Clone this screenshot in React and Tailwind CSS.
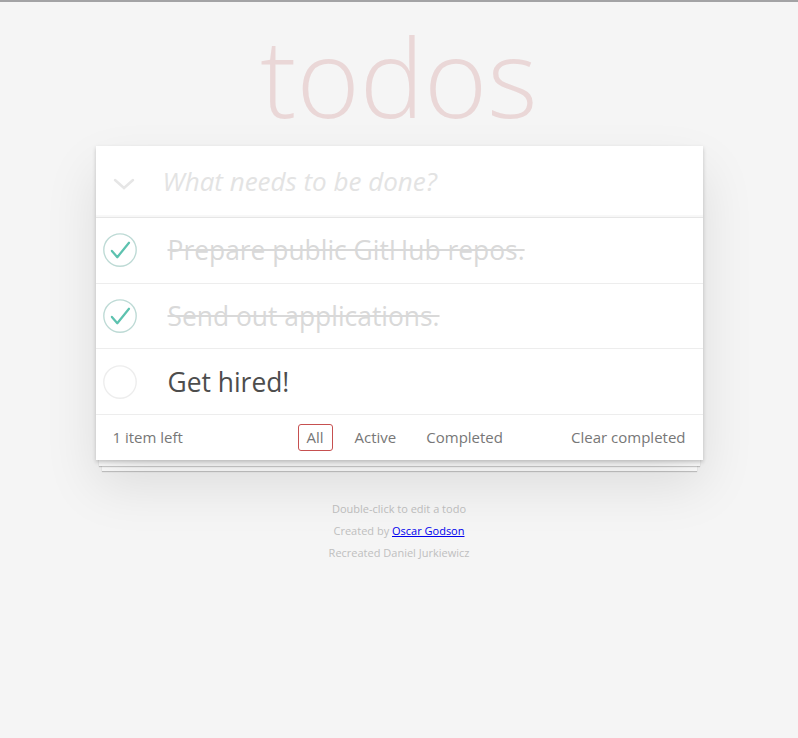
import React from "react";

const todos = [
	{ id: 1, title: "Prepare public GitHub repos.", completed: true },
	{ id: 2, title: "Send out applications.", completed: true },
	{ id: 3, title: "Get hired!", completed: false },
];

const Check = ({ done }) => (
	<svg className="w-[36px] h-[36px] shrink-0" viewBox="0 0 40 40">
		<circle
			cx="20"
			cy="20"
			r="18"
			fill="none"
			stroke={done ? "#bddad5" : "#ededed"}
			strokeWidth="1.5"
		/>
		{done && (
			<path
				d="M11 21l6 7 13-16"
				fill="none"
				stroke="#5dc2af"
				strokeWidth="2.5"
				strokeLinecap="round"
				strokeLinejoin="round"
			/>
		)}
	</svg>
);

const App = () => {
	return (
		<div
			className="min-h-[738px] bg-[#f5f5f5] border-t-2 border-[#a3a3a5] flex flex-col items-center text-[#4d4d4d]"
			style={{ fontFamily: '"Open Sans", "Liberation Sans", sans-serif' }}
		>
			<h1 className="mt-[6px] text-[108px] leading-[138px] font-thin text-[rgba(175,47,47,0.15)] tracking-normal">
				todos
			</h1>

			<div className="relative w-[607px]">
				{/* stacked paper */}
				<div className="absolute left-[6px] right-[6px] bottom-[-11px] h-[20px] bg-white shadow-[0_1px_1px_rgba(0,0,0,0.2)]" />
				<div className="absolute left-[3px] right-[3px] bottom-[-6px] h-[20px] bg-white shadow-[0_1px_1px_rgba(0,0,0,0.2)]" />

				<section className="relative bg-white shadow-[0_2px_4px_rgba(0,0,0,0.2),0_25px_50px_rgba(0,0,0,0.1)]">
					{/* new todo */}
					<div className="flex items-center h-[72px] shadow-[inset_0_-2px_1px_rgba(0,0,0,0.03)] border-b border-[#e6e6e6]">
						<div className="w-[56px] flex justify-center pt-[4px]">
							<svg className="w-[22px] h-[14px]" viewBox="0 0 22 14">
								<path
									d="M2 3l9 8 9-8"
									fill="none"
									stroke="#e6e6e6"
									strokeWidth="2.5"
									strokeLinecap="round"
								/>
							</svg>
						</div>
						<input
							className="flex-1 pl-[11px] text-[26px] italic bg-transparent outline-none placeholder:text-[#e3e3e3]"
							placeholder="What needs to be done?"
						/>
					</div>

					<ul>
						{todos.map((t) => (
							<li
								key={t.id}
								className="flex items-center h-[65.67px] border-b border-[#ededed] pl-[6px]"
							>
								<Check done={t.completed} />
								<span
									className={`ml-[30px] text-[26.4px] leading-[34px] ${
										t.completed
											? "text-[#d9d9d9] line-through"
											: "text-[#4d4d4d]"
									}`}
								>
									{t.title}
								</span>
							</li>
						))}
					</ul>

					<footer className="flex items-center h-[45px] px-[17px] text-[15px] text-[#777]">
						<span className="w-[186px]">1 item left</span>
						<div className="flex items-center gap-[14px] -ml-[1px]">
							<span className="px-[8px] py-[1px] rounded-[3px] border border-[#c65050]">
								All
							</span>
							<span className="px-[8px] py-[1px]">Active</span>
							<span className="px-[8px] py-[1px]">Completed</span>
						</div>
						<span className="ml-auto">Clear completed</span>
					</footer>
				</section>
			</div>

			<footer className="mt-[38px] text-[11px] leading-[22px] text-[#bfbfbf] text-center">
				<p>Double-click to edit a todo</p>
				<p>
					Created by{" "}
					<a href="#" className="text-[#0000ee] underline">
						Oscar Godson
					</a>
				</p>
				<p>Recreated Daniel Jurkiewicz</p>
			</footer>
		</div>
	);
};

export default App;
